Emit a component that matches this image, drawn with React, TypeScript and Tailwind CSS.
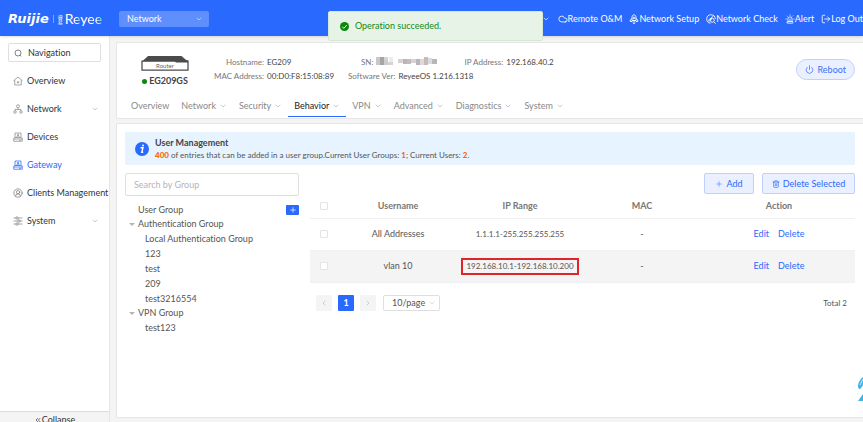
import React, { useState } from 'react';
import { ChevronDown, ChevronLeft, ChevronRight, ChevronsLeft, Cloud, LogOut, Plus, Power, Siren, Trash2, CircleUserRound } from 'lucide-react';

interface IconProps {
  className?: string;
}

const DeviceIcon = ({ className }: IconProps) => (
  <svg viewBox="0 0 20 20" className={className} fill="none" stroke="currentColor" strokeWidth="1.5">
    <path d="M4 11V2h12v9M1.500 18.500v-6L4 11h12l2.500 1.500v6z" />
    <path d="M1.500 14h17M7 11c0-4 6-4 6 0" />
    <circle cx="10" cy="6" r="1.500" />
    <path d="M12 16.500h4" />
  </svg>
);

const SearchIcon = ({ className }: IconProps) => (
  <svg viewBox="0 0 20 20" className={className} fill="none" stroke="currentColor" strokeWidth="1.8">
    <circle cx="10" cy="10" r="7.500" />
    <path d="M14 14.500l3.500 4" />
  </svg>
);

const HomeIcon = ({ className }: IconProps) => (
  <svg viewBox="0 0 20 20" className={className} fill="none" stroke="currentColor" strokeWidth="1.5">
    <path d="M1 9.500L10 2l9 7.500M3.500 8v10h13V8" />
    <path d="M10 10v5M7.500 12.500h5" />
  </svg>
);

const NetworkIcon = ({ className }: IconProps) => (
  <svg viewBox="0 0 20 20" className={className} fill="none" stroke="currentColor" strokeWidth="1.5">
    <circle cx="10" cy="4.500" r="3" />
    <circle cx="4" cy="16" r="2.500" />
    <circle cx="16" cy="16" r="2.500" />
    <path d="M10 7.500V11M4 13.500V11h12v2.500" />
  </svg>
);

const SlidersIcon = ({ className }: IconProps) => (
  <svg viewBox="0 0 20 20" className={className} fill="none" stroke="currentColor" strokeWidth="1.500">
    <path d="M1 4h5M10 4h9M1 10h9M14 10h5M1 16h5M10 16h9" />
    <path d="M6 2h4v4H6zM10 8h4v4h-4zM6 14h4v4H6z" />
  </svg>
);

const RocketIcon = ({ className }: IconProps) => (
  <svg viewBox="0 0 20 20" className={className} fill="none" stroke="currentColor" strokeWidth="1.9">
    <path d="M6 13V7c0-3 2-5 4-6 2 1 4 3 4 6v6zM6 9l-3.500 3v3H6M14 9l3.500 3v3H14M7 16h6M8.500 19h3" />
    <circle cx="10" cy="8" r="1.700" />
  </svg>
);

const CheckIcon = ({ className }: IconProps) => (
  <svg viewBox="0 0 20 20" className={className} fill="none" stroke="currentColor" strokeWidth="1.700">
    <path d="M9 18.500A8.500 8.500 0 1 1 18.500 10" />
    <path d="M4 13L15 4M5 15.500l7-6" />
    <circle cx="12.500" cy="12.500" r="4" />
    <path d="M15.500 15.500l4 4" />
  </svg>
);

const RouterPicture = ({ className }: IconProps) => (
  <svg viewBox="0 0 96 30" className={className}>
    <path d="M14 0h67l14 12H1z" fill="#4b4b4d" />
    <path d="M2 10h92v18H2z" fill="#fff" stroke="#4b4b4d" strokeWidth="2.500" />
    <path d="M66 9h28v4H70z" fill="#4b4b4d" />
  </svg>
);

const MaskedSerial = ({ className }: IconProps) => (
  <svg viewBox="0 0 62 10" className={className} shapeRendering="crispEdges">
    <path d="M0 1h4v8H0z" fill="#c9c7ca" />
    <path d="M4 1h4v8H4z" fill="#a7a3a6" />
    <path d="M8 1h4v3H8zM12 6h5v3h-5z" fill="#d9d3d0" />
    <path d="M8 4h4v5H8z" fill="#c8ccd3" />
    <path d="M13 1h4v5h-4z" fill="#e9ecf0" />
    <path d="M22 3h5v4h-5zM35 3h5v4h-5z" fill="#d5d2d4" />
    <path d="M27 3h4v5h-4zM40 3h4v6h-4zM56 3h5v5h-5z" fill="#b9b6bb" />
    <path d="M31 3h4v5h-4zM48 1h4v8h-4z" fill="#cbb9b6" />
    <path d="M44 3h4v6h-4zM52 2h4v6h-4z" fill="#d8dbe2" />
  </svg>
);

const sideItems = [
  { label: 'Overview', icon: HomeIcon },
  { label: 'Network', icon: NetworkIcon, more: true },
  { label: 'Devices', icon: DeviceIcon },
  { label: 'Gateway', icon: DeviceIcon, active: true },
  { label: 'Clients Management', icon: CircleUserRound },
  { label: 'System', icon: SlidersIcon, more: true },
];

const tabs = ['Overview', 'Network', 'Security', 'Behavior', 'VPN', 'Advanced', 'Diagnostics', 'System'];

const headerLinks = [
  { label: 'Remote O&M', icon: Cloud },
  { label: 'Network Setup', icon: RocketIcon },
  { label: 'Network Check', icon: CheckIcon },
  { label: 'Alert', icon: Siren },
  { label: 'Log Out', icon: LogOut },
];

const groups = [
  { name: 'User Group', children: [] },
  { name: 'Authentication Group', children: ['Local Authentication Group', '123', 'test', '209', 'test3216554'] },
  { name: 'VPN Group', children: ['test123'] },
];

const users = [
  { name: 'All Addresses', ip: '1.1.1.1-255.255.255.255', mac: '-' },
  { name: 'vlan 10', ip: '192.168.10.1-192.168.10.200', mac: '-', marked: true },
];

const Tick = ({ label, checked, onChange }: { label: string; checked: boolean; onChange: () => void }) => (
  <input
    type="checkbox"
    aria-label={label}
    checked={checked}
    onChange={onChange}
    className="block size-2 appearance-none rounded-[1px] border border-[#e2e4e9] bg-white checked:bg-[#2a69fd]"
  />
);

const Header = () => (
  <header className="relative flex h-9 shrink-0 items-center bg-[#2a69fd] pt-[2px] pl-2 text-white shadow-sm">
    <div className="flex w-[111px] shrink-0 items-center">
      <span className="font-['DejaVu_Sans'] text-[13px] leading-4 font-bold italic">Ruijie</span>
      <span className="mx-1 h-2 w-px bg-white/40" />
      <span className="w-[7px] font-['Noto_Sans_CJK_SC',sans-serif] text-[5px] leading-[5px]">睿易</span>
      <span className="font-['Lato'] text-[14px] leading-4">
        R<span className="bg-linear-to-r from-white from-60% to-[#35e0c8] bg-clip-text text-transparent">e</span>y
        <span className="bg-linear-to-r from-white from-60% to-[#35e0c8] bg-clip-text text-transparent">ee</span>
      </span>
    </div>
    <div className="relative w-[90px] shrink-0">
      <select aria-label="Scope" className="block h-4 w-full appearance-none rounded-xs bg-white/25 pl-2 text-[9px] leading-4 text-white">
        <option>Network</option>
      </select>
      <ChevronDown className="absolute top-1 right-[6px] size-2" strokeWidth={1.5} />
    </div>
    <div className="ml-auto flex shrink-0 items-center">
      <div className="h-[17px] w-[72px] rounded-xs bg-white/70" />
      <ChevronDown className="mr-2 ml-[41px] size-2" strokeWidth={2} />
      <nav className="flex items-center gap-[7px]">
        {headerLinks.map(({ label, icon: Icon }) => (
          <a key={label} href="#" className="flex items-center whitespace-nowrap">
            <Icon className="size-[10px]" />
            {label}
          </a>
        ))}
      </nav>
    </div>
  </header>
);

const Toast = () => (
  <div role="status" className="absolute top-[11px] left-[38%] flex h-[30px] w-[215px] items-center gap-[6px] rounded-xs border border-[#d3e9d3] bg-[#e7f3e7] pl-[11px] text-[#138a13]">
    <svg viewBox="0 0 20 20" className="size-[9px]">
      <circle cx="10" cy="10" r="10" fill="#0c870c" />
      <path d="M5 10.500l3.500 3.500L15 7" fill="none" stroke="#fff" strokeWidth="2.200" />
    </svg>
    Operation succeeded.
  </div>
);

const Sidebar = () => (
  <aside className="flex w-[110px] shrink-0 flex-col border-r border-[#e6e6e6] bg-white text-[#333]">
    <button className="mx-2 mt-[7px] flex h-[19px] items-center gap-[6px] rounded-xs border border-[#dedfe3] pl-[5px]">
      <SearchIcon className="size-2 text-[#555]" />
      Navigation
    </button>
    <nav className="mt-[5px] flex flex-col">
      {sideItems.map(({ label, icon: Icon, more, active }) => (
        <a key={label} href="#" className={`flex h-7 items-center gap-1 pl-[13px] whitespace-nowrap ${active ? 'text-[#2a69fd]' : ''}`}>
          <Icon className={`size-[10px] shrink-0 ${active ? '' : 'text-[#888]'}`} />
          {label}
          {more && <ChevronDown className="mr-[10px] ml-auto size-2 text-[#999]" strokeWidth={1.5} />}
        </a>
      ))}
    </nav>
    <button className="mt-auto flex h-[11px] items-start justify-center overflow-hidden border-t border-[#dcdcdc] bg-[#f4f4f4] pt-[2px]">
      <ChevronsLeft className="mt-[2px] size-2" />
      <span className="leading-3">Collapse</span>
    </button>
  </aside>
);

const Field = ({ label, children }: { label: string; children: React.ReactNode }) => (
  <>
    <dt className="text-right text-[#777]">{label}:</dt>
    <dd className="text-[#444]">{children}</dd>
  </>
);

const DevicePanel = () => (
  <section className="flex h-[77px] shrink-0 flex-col justify-between rounded-l-xs border border-r-0 border-[#e6e6e6] bg-white">
    <div className="flex items-start pt-[13px] pr-2">
      <div className="ml-[23px] flex w-[50px] flex-col items-center">
        <div className="relative">
          <RouterPicture className="h-[15px] w-12" />
          <span className="absolute inset-x-0 top-[6px] text-center text-[6px] leading-[8px] text-[#666]">Router</span>
        </div>
        <div className="mt-1 flex items-center gap-[2px] leading-3 font-bold text-[#444]">
          <span className="size-[5px] rounded-full bg-[#0c870c]" />
          EG209GS
        </div>
      </div>
      <dl className="ml-6 grid grid-cols-[auto_auto] gap-x-[3px] gap-y-[2px] text-[8px] leading-3 whitespace-nowrap">
        <Field label="Hostname">EG209</Field>
        <Field label="MAC Address">00:D0:F8:15:08:89</Field>
      </dl>
      <div className="ml-[14px] flex flex-col gap-[2px] text-[8px] leading-3 whitespace-nowrap">
        <dl className="flex gap-[3px] pl-[13px]">
          <Field label="SN"><MaskedSerial className="mr-[23px] h-[10px] w-[62px]" /></Field>
          <Field label="IP Address">192.168.40.2</Field>
        </dl>
        <dl className="flex gap-[3px]">
          <Field label="Software Ver">ReyeeOS 1.216.1318</Field>
        </dl>
      </div>
      <button className="mt-[3px] ml-auto flex h-[21px] items-center gap-1 rounded-full border border-[#bfd1fb] bg-[#eaf0ff] px-2 text-[#3b70f5]">
        <Power className="size-[9px]" />
        Reboot
      </button>
    </div>
    <nav className="flex pl-2 text-[#888]">
      {tabs.map((tab) => (
        <a key={tab} href="#" className={`mb-px flex h-[21px] items-center gap-[3px] border-b px-[6px] ${tab === 'Behavior' ? 'border-[#2a69fd] text-[#222]' : 'border-transparent'}`}>
          {tab}
          {tab !== 'Overview' && <ChevronDown className="size-2 text-[#999]" strokeWidth={1.5} />}
        </a>
      ))}
    </nav>
  </section>
);

const GroupTree = () => (
  <div className="w-[174px] shrink-0">
    <input
      aria-label="Search by Group"
      placeholder="Search by Group"
      className="block h-[23px] w-full rounded-xs border border-[#dedfe3] px-2 text-[9px] placeholder:text-[#b3b5ba]"
    />
    <ul className="mt-[7px] text-[#555]">
      {groups.map((group) => (
        <li key={group.name}>
          <div className="flex h-[14px] items-center">
            <span className="flex w-[13px] pl-1">
              {group.children.length > 0 && <span className="border-x-[3px] border-t-[3px] border-x-transparent border-t-[#b5b5b5]" />}
            </span>
            {group.name}
            {group.children.length === 0 && (
              <button aria-label="Add group" className="ml-auto flex h-[10px] w-[13px] items-center justify-center rounded-[1px] bg-[#2a69fd] text-white">
                <Plus className="size-2" />
              </button>
            )}
          </div>
          <ul className="pl-5 leading-[15px]">
            {group.children.map((child) => <li key={child}>{child}</li>)}
          </ul>
        </li>
      ))}
    </ul>
  </div>
);

const UserTable = () => {
  const [picked, setPicked] = useState<string[]>([]);
  const toggle = (name: string) => setPicked(picked.includes(name) ? picked.filter((n) => n !== name) : [...picked, name]);
  const allPicked = picked.length === users.length;

  return (
    <div className="flex min-w-0 flex-1 flex-col">
      <div className="flex justify-end gap-2">
        <button className="flex h-[21px] w-[50px] items-center justify-center gap-[3px] rounded-xs border border-[#bfd1fb] bg-[#eaf0ff] text-[#2a69fd]">
          <Plus className="size-2" strokeWidth={1.5} />
          Add
        </button>
        <button className="flex h-[21px] w-[93px] items-center justify-center gap-[3px] rounded-xs border border-[#bfd1fb] bg-[#eaf0ff] text-[#2a69fd]">
          <Trash2 className="size-2" />
          Delete Selected
        </button>
      </div>
      <table className="w-full table-fixed text-center text-[#555]">
        <thead className="text-[#777]">
          <tr className="h-6 border-b border-[#f0f0f0]">
            <th className="w-[27px] pl-[10px]">
              <Tick label="Select all" checked={allPicked} onChange={() => setPicked(allPicked ? [] : users.map((u) => u.name))} />
            </th>
            <th>Username</th>
            <th>IP Range</th>
            <th>MAC</th>
            <th className="w-[152px]">Action</th>
          </tr>
        </thead>
        <tbody>
          {users.map((user) => (
            <tr key={user.name} className={`h-8 border-b border-[#eef1f5] ${user.marked ? 'bg-[#f4f4f5]' : ''}`}>
              <td className="pl-[10px]">
                <Tick label={user.name} checked={picked.includes(user.name)} onChange={() => toggle(user.name)} />
              </td>
              <td>{user.name}</td>
              <td className="text-[8px] whitespace-nowrap">
                {user.marked ? <span className="inline-block border-2 border-[#e0242b] px-[3px] leading-[13px]">{user.ip}</span> : user.ip}
              </td>
              <td>{user.mac}</td>
              <td className="text-[#2a69fd]">
                <a href="#" className="mr-[9px]">Edit</a>
                <a href="#">Delete</a>
              </td>
            </tr>
          ))}
        </tbody>
      </table>
      <div className="mt-3 flex items-center pl-[6px]">
        <button aria-label="Previous page" className="flex size-4 items-center justify-center rounded-[1px] bg-[#f4f4f5] text-[#bbb]">
          <ChevronLeft className="size-2" />
        </button>
        <button className="mx-[6px] flex size-4 items-center justify-center rounded-[1px] bg-[#2a69fd] font-bold text-white">1</button>
        <button aria-label="Next page" className="flex size-4 items-center justify-center rounded-[1px] bg-[#f4f4f5] text-[#bbb]">
          <ChevronRight className="size-2" />
        </button>
        <div className="relative ml-[7px] w-[57px]">
          <select aria-label="Rows per page" className="block h-4 w-full appearance-none rounded-xs border border-[#dedfe3] pl-2 text-[9px] leading-[14px] text-[#555]">
            <option>10/page</option>
          </select>
          <ChevronDown className="absolute top-1 right-1 size-2 text-[#bbb]" strokeWidth={1.5} />
        </div>
        <span className="mr-2 ml-auto text-[8px] text-[#555]">Total 2</span>
      </div>
    </div>
  );
};

const Helper = () => (
  <svg viewBox="0 0 5 26" className="absolute right-0 bottom-5 h-[26px] w-[5px]">
    <path d="M5 1C2 3 0 7 0 10c0 3 2 4 3 2l2-3z" fill="#3fb4ea" />
    <path d="M5 3L2 9" stroke="#c5ebfb" strokeWidth="1" />
    <path d="M5 18L0 25h5z" fill="#3fb4ea" />
  </svg>
);

export default function App() {
  return (
    <div className="relative flex h-screen flex-col overflow-hidden bg-[#f4f4f4] font-['Lato',sans-serif] text-[9px] leading-3 [font-variant-ligatures:none]">
      <Header />
      <div className="flex min-h-0 flex-1">
        <Sidebar />
        <main className="flex min-w-0 flex-1 flex-col gap-1 pt-[6px] pb-1 pl-[6px]">
          <DevicePanel />
          <section className="flex flex-1 flex-col rounded-l-xs border border-r-0 border-[#e6e6e6] bg-white pt-2 pr-2 pl-2">
            <div className="flex h-[33px] shrink-0 items-center gap-[6px] rounded-xs bg-[#e7f3fe] pl-[10px]">
              <svg viewBox="0 0 28 28" className="size-[14px]">
                <circle cx="14" cy="14" r="14" fill="#2a69fd" />
                <path d="M11 11.500h5l-2.500 9h3" fill="none" stroke="#fff" strokeWidth="2.800" />
                <circle cx="16" cy="7" r="2" fill="#fff" />
              </svg>
              <div className="text-[#555]">
                <h1 className="font-bold text-[#444]">User Management</h1>
                <p className="text-[8px]">
                  <b className="font-black text-[#f56c0a]">400</b> of entries that can be added in a user group.Current User Groups: <b className="font-black text-[#f56c0a]">1</b>; Current Users: <b className="font-black text-[#f56c0a]">2</b>.
                </p>
              </div>
            </div>
            <div className="mt-2 flex gap-[11px]">
              <GroupTree />
              <UserTable />
            </div>
          </section>
        </main>
      </div>
      <Toast />
      <Helper />
    </div>
  );
}
